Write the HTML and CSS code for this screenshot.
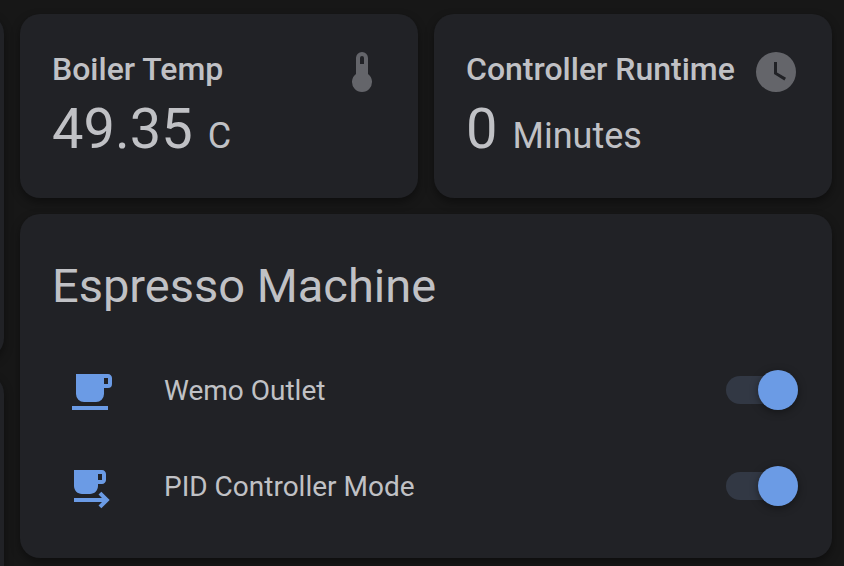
FILE: index.html
```html
<!DOCTYPE html>
<html lang="en">
<head>
<meta charset="utf-8">
<meta name="viewport" content="width=device-width, initial-scale=1">
<title>Espresso Machine</title>
<link rel="stylesheet" href="styles.css">
</head>
<body>
<div class="dashboard">
  <div class="side-column" aria-hidden="true">
    <div class="card side-card"></div>
    <div class="card side-card side-card-last"></div>
  </div>
  <main class="column">
    <div class="sensors">
      <section class="card sensor">
        <div class="sensor-header">
          <h2 class="sensor-name">Boiler Temp</h2>
          <svg class="icon" viewBox="0 0 24 24" aria-hidden="true"><path d="M15 13V5A3 3 0 0 0 9 5V13A5 5 0 1 0 15 13M12 4A1 1 0 0 1 13 5V8H11V5A1 1 0 0 1 12 4Z"/></svg>
        </div>
        <p class="reading"><span class="value">49.35</span> <span class="unit">C</span></p>
      </section>
      <section class="card sensor">
        <div class="sensor-header">
          <h2 class="sensor-name">Controller Runtime</h2>
          <svg class="icon" viewBox="0 0 24 24" aria-hidden="true"><path d="M12 2A10 10 0 0 0 2 12A10 10 0 0 0 12 22A10 10 0 0 0 22 12A10 10 0 0 0 12 2M16.2 16.2L11 13V7H12.5V12.2L17 14.9L16.2 16.2Z"/></svg>
        </div>
        <p class="reading"><span class="value">0</span> <span class="unit">Minutes</span></p>
      </section>
    </div>
    <section class="card entities">
      <h1 class="title">Espresso Machine</h1>
      <div class="rows">
        <div class="row">
          <svg class="icon icon-on" viewBox="0 0 24 24" aria-hidden="true"><path d="M2,21H20V19H2M20,8H18V5H20M20,3H4V13A4,4 0 0,0 8,17H14A4,4 0 0,0 18,13V10H20A2,2 0 0,0 22,8V5C22,3.89 21.1,3 20,3Z"/></svg>
          <label class="row-name" for="outlet">Wemo Outlet</label>
          <input class="switch" type="checkbox" role="switch" id="outlet" checked>
        </div>
        <div class="row">
          <svg class="icon icon-on" viewBox="0 0 24 24" aria-hidden="true"><path d="M3,19V17H17L15.26,15.24L16.67,13.83L20.84,18L16.67,22.17L15.26,20.76L17,19H3M17,8V5H15V8H17M17,3C18.11,3 19,3.9 19,5V8C19,9.11 18.11,10 17,10H15V11C15,13.21 13.21,15 11,15H7C4.79,15 3,13.21 3,11V3H17Z"/></svg>
          <label class="row-name" for="pid">PID Controller Mode</label>
          <input class="switch" type="checkbox" role="switch" id="pid" checked>
        </div>
      </div>
    </section>
  </main>
</div>
</body>
</html>
```
FILE: styles.css
```css
* {
  box-sizing: border-box;
}

body {
  margin: 0;
  background: #171717;
  color: #c0c1c5;
  font-family: Roboto, "Liberation Sans", sans-serif;
  overflow: hidden;
}

h1, h2, p {
  margin: 0;
  font-weight: 400;
}

.dashboard {
  display: grid;
  grid-template-columns: 4px 1fr;
  gap: 16px;
  min-height: 100vh;
  padding: 14px 12px 0 0;
}

.card {
  background: #212226;
  border-radius: 20px;
  box-shadow: 0 4px 10px rgba(0, 0, 0, 0.4);
}

.side-column {
  display: flex;
  flex-direction: column;
  gap: 16px;
  margin-left: -40px;
}

.side-card {
  height: 344px;
}

.side-card-last {
  flex: 1;
  border-radius: 0 20px 0 0;
}

.column {
  display: flex;
  flex-direction: column;
  gap: 16px;
  padding-bottom: 8px;
}

.sensors {
  display: grid;
  grid-template-columns: 1fr 1fr;
  gap: 16px;
}

.sensor {
  padding: 34px 32px 36px;
}

.sensor-header {
  display: flex;
  align-items: flex-start;
  justify-content: space-between;
  height: 48px;
}

.sensor-name {
  font-size: 32px;
  font-weight: 500;
  line-height: 42px;
  white-space: nowrap;
}

.icon {
  flex: none;
  width: 48px;
  height: 48px;
  fill: #64656a;
}

.icon-on {
  fill: #6b9be5;
}

.reading {
  display: flex;
  align-items: baseline;
  gap: 15px;
  line-height: 66px;
  white-space: nowrap;
}

.value {
  font-size: 56px;
}

.unit {
  font-size: 36px;
  line-height: 40px;
}

.entities {
  padding: 40px 32px 30px;
}

.title {
  font-size: 47px;
  line-height: 64px;
}

.rows {
  display: grid;
  gap: 16px;
  padding-top: 34px;
}

.row {
  display: flex;
  align-items: center;
  height: 80px;
  padding-left: 16px;
}

.row-name {
  flex: 1;
  padding: 0 16px 2px 48px;
  font-size: 28px;
  line-height: 40px;
}

.switch {
  appearance: none;
  display: flex;
  align-items: center;
  width: 72px;
  height: 28px;
  margin: 0 2px 4px 0;
  border-radius: 14px;
  background: #323844;
}

.switch::before {
  content: "";
  flex: none;
  width: 40px;
  height: 40px;
  border-radius: 50%;
  background: #9a9b9f;
  box-shadow: 0 2px 8px rgba(0, 0, 0, 0.4);
}

.switch:checked {
  justify-content: flex-end;
}

.switch:checked::before {
  background: #6b9be5;
}
```
